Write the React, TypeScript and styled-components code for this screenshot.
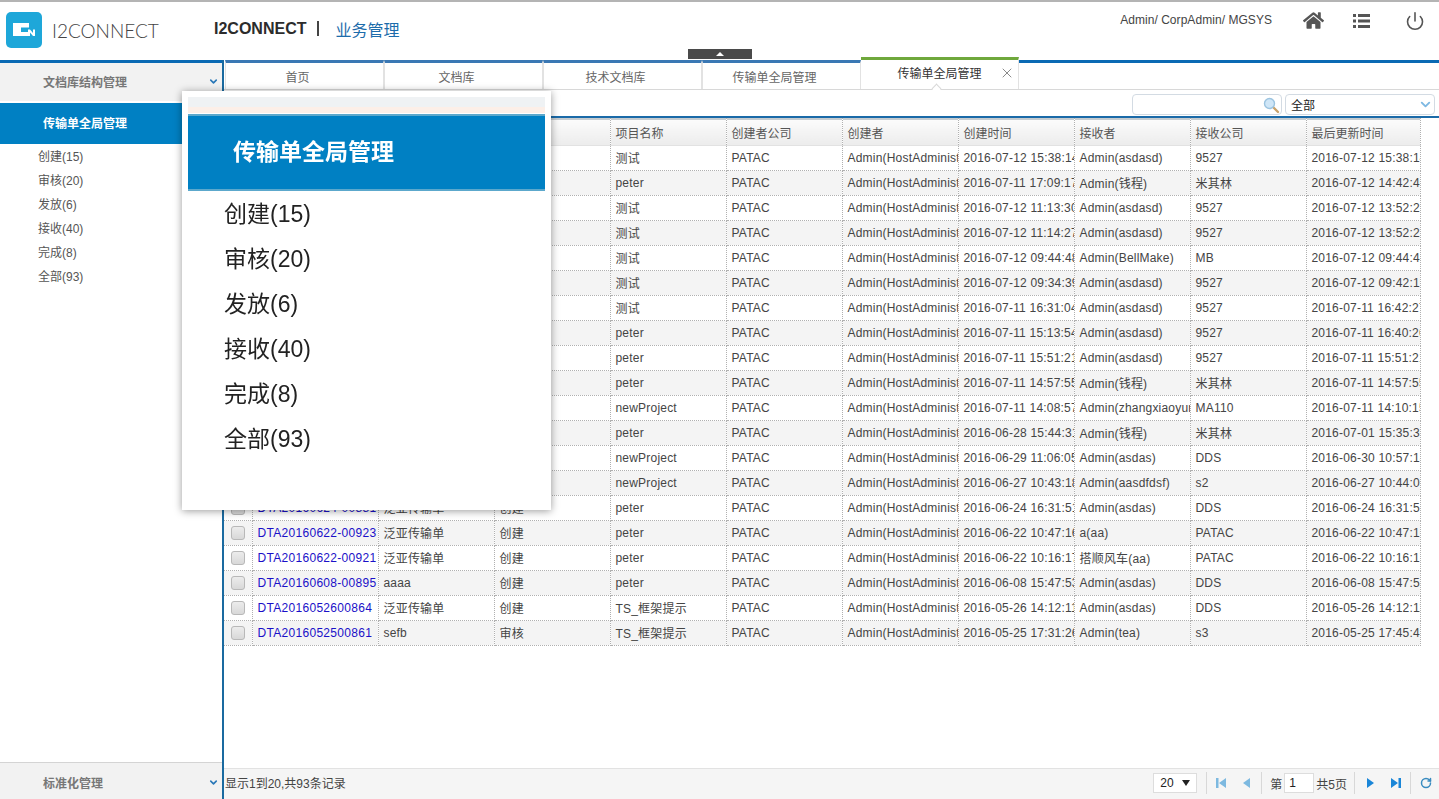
import { createGlobalStyle, styled } from "styled-components";
import { ChevronDown, Power, RotateCw, X } from "lucide-react";
import { FaHome } from "react-icons/fa";

const SANS = `"Liberation Sans", "Noto Sans CJK SC", sans-serif`;

const GlobalStyle = createGlobalStyle`
  html, body {
    margin: 0;
    padding: 0;
    height: 100%;
    overflow: hidden;
    background: #fff;
    font-family: ${SANS};
    font-size: 12px;
    color: #444;
  }
  * { box-sizing: border-box; }
`;

const tabs = ["首页", "文档库", "技术文档库", "传输单全局管理"];
const menuItems = ["创建(15)", "审核(20)", "发放(6)", "接收(40)", "完成(8)", "全部(93)"];
const columns = ["", "传输单编号", "传输单名称", "状态", "项目名称", "创建者公司", "创建者", "创建时间", "接收者", "接收公司", "最后更新时间"];
const columnWidths = [28, 126, 116, 116, 116, 116, 116, 116, 116, 116, 114];

type Row = [string, string, string, string, string, string, string, string];

const rows: Row[] = [
  ["DTA20160712-00981", "泛亚传输单", "创建", "测试", "2016-07-12 15:38:14", "Admin(asdasd)", "9527", "2016-07-12 15:38:14"],
  ["DTA20160711-00979", "泛亚传输单", "创建", "peter", "2016-07-11 17:09:17", "Admin(钱程)", "米其林", "2016-07-12 14:42:46"],
  ["DTA20160712-00977", "泛亚传输单", "创建", "测试", "2016-07-12 11:13:30", "Admin(asdasd)", "9527", "2016-07-12 13:52:25"],
  ["DTA20160712-00975", "泛亚传输单", "创建", "测试", "2016-07-12 11:14:27", "Admin(asdasd)", "9527", "2016-07-12 13:52:21"],
  ["DTA20160712-00973", "泛亚传输单", "创建", "测试", "2016-07-12 09:44:48", "Admin(BellMake)", "MB", "2016-07-12 09:44:48"],
  ["DTA20160712-00971", "泛亚传输单", "创建", "测试", "2016-07-12 09:34:39", "Admin(asdasd)", "9527", "2016-07-12 09:42:19"],
  ["DTA20160711-00969", "泛亚传输单", "创建", "测试", "2016-07-11 16:31:04", "Admin(asdasd)", "9527", "2016-07-11 16:42:27"],
  ["DTA20160711-00967", "泛亚传输单", "创建", "peter", "2016-07-11 15:13:54", "Admin(asdasd)", "9527", "2016-07-11 16:40:26"],
  ["DTA20160711-00965", "泛亚传输单", "创建", "peter", "2016-07-11 15:51:21", "Admin(asdasd)", "9527", "2016-07-11 15:51:21"],
  ["DTA20160711-00963", "泛亚传输单", "创建", "peter", "2016-07-11 14:57:55", "Admin(钱程)", "米其林", "2016-07-11 14:57:55"],
  ["DTA20160711-00961", "泛亚传输单", "创建", "newProject", "2016-07-11 14:08:57", "Admin(zhangxiaoyun)", "MA110", "2016-07-11 14:10:15"],
  ["DTA20160628-00901", "泛亚传输单", "创建", "peter", "2016-06-28 15:44:31", "Admin(钱程)", "米其林", "2016-07-01 15:35:36"],
  ["DTA20160629-00899", "泛亚传输单", "创建", "newProject", "2016-06-29 11:06:05", "Admin(asdas)", "DDS", "2016-06-30 10:57:18"],
  ["DTA20160627-00897", "泛亚传输单", "创建", "newProject", "2016-06-27 10:43:18", "Admin(aasdfdsf)", "s2", "2016-06-27 10:44:05"],
  ["DTA20160624-00881", "泛亚传输单", "创建", "peter", "2016-06-24 16:31:51", "Admin(asdas)", "DDS", "2016-06-24 16:31:51"],
  ["DTA20160622-00923", "泛亚传输单", "创建", "peter", "2016-06-22 10:47:16", "a(aa)", "PATAC", "2016-06-22 10:47:16"],
  ["DTA20160622-00921", "泛亚传输单", "创建", "peter", "2016-06-22 10:16:17", "搭顺风车(aa)", "PATAC", "2016-06-22 10:16:17"],
  ["DTA20160608-00895", "aaaa", "创建", "peter", "2016-06-08 15:47:53", "Admin(asdas)", "DDS", "2016-06-08 15:47:53"],
  ["DTA2016052600864", "泛亚传输单", "创建", "TS_框架提示", "2016-05-26 14:12:11", "Admin(asdas)", "DDS", "2016-05-26 14:12:11"],
  ["DTA2016052500861", "sefb", "审核", "TS_框架提示", "2016-05-25 17:31:26", "Admin(tea)", "s3", "2016-05-25 17:45:41"],
];

const Page = styled.div`
  position: relative;
  width: 1439px;
  height: 799px;
  display: flex;
  flex-direction: column;
  overflow: hidden;
  background: #fff;
`;

const Header = styled.header`
  height: 60px;
  flex: none;
  display: flex;
  align-items: center;
  border-top: 2px solid #b4b4b4;
  padding: 0 14px 5px 6px;
`;

const Brand = styled.div`
  display: flex;
  align-items: center;
  gap: 10px;
  width: 208px;
  margin-top: 3px;
`;

const BrandName = styled.span`
  font-family: Lato, sans-serif;
  font-weight: 300;
  font-size: 19px;
  color: #444;
`;

const SystemTitle = styled.div`
  display: flex;
  align-items: center;
  flex: 1;
  font-size: 16px;
`;

const SystemName = styled.b`
  color: #2c2c2c;
`;

const Divider = styled.i`
  width: 2px;
  height: 15px;
  margin: 0 16px 0 11px;
  background: #444;
`;

const SystemModule = styled.span`
  color: #1c6cab;
`;

const UserName = styled.span`
  margin: 0 31px 17px 0;
  color: #444;
  letter-spacing: 0.05px;
`;

const HeaderIcons = styled.div`
  display: flex;
  align-items: center;
  color: #555;
  margin-bottom: 16px;
`;

const HeaderIcon = styled.span<{ $gap: number }>`
  display: flex;
  margin-right: ${(p) => p.$gap}px;
`;

const Body = styled.div`
  flex: 1;
  display: flex;
  min-height: 0;
`;

const Sidebar = styled.aside`
  width: 222px;
  flex: none;
  display: flex;
  flex-direction: column;
  border-top: 3px solid #0a6ab4;
`;

const SideHead = styled.div`
  height: 38px;
  flex: none;
  display: flex;
  align-items: center;
  justify-content: space-between;
  padding: 0 3px 1px 43px;
  background: #f2f2f2;
  font-weight: bold;
  color: #777;
  svg { color: #2a78b8; }
`;

const SideActive = styled.div`
  height: 41px;
  margin-top: 2px;
  display: flex;
  align-items: center;
  padding: 0 0 2px 43px;
  background: #0080c3;
  color: #fff;
  font-weight: bold;
`;

const SideList = styled.ul`
  flex: 1;
  list-style: none;
  margin: 0;
  padding: 1px 0 0 38px;
`;

const SideItem = styled.li`
  height: 24px;
  line-height: 24px;
  color: #555;
`;

const SideFoot = styled(SideHead)`
  height: 37px;
  padding-bottom: 0;
  padding-top: 2px;
  border-top: 1px solid #d4d4d4;
`;

const Main = styled.main`
  flex: 1;
  min-width: 0;
  display: flex;
  flex-direction: column;
  border-left: 2px solid #1a6aa0;
`;

const TabBar = styled.nav`
  height: 30px;
  flex: none;
  display: flex;
  align-items: stretch;
  padding-left: 1px;
  border-bottom: 1px solid #d8d8d8;
`;

const Tab = styled.div`
  width: 159px;
  flex: none;
  border-top: 3px solid #3a78b4;
  border-right: 1px solid #e2e2e2;
  border-left: 1px solid #e2e2e2;
  display: flex;
  align-items: center;
  justify-content: center;
  color: #666;
  padding: 1px 14px 0 0;
`;

const ActiveTab = styled.div`
  position: relative;
  width: 158px;
  flex: none;
  margin-top: -3px;
  height: 32px;
  border-top: 3px solid #6fa83c;
  border-right: 1px solid #e2e2e2;
  display: flex;
  align-items: center;
  justify-content: center;
  color: #333;
  background: #fff;
  padding-bottom: 5px;
  &::after {
    content: "";
    position: absolute;
    left: 72px;
    bottom: -3px;
    width: 6px;
    height: 6px;
    background: #fff;
    border-top: 1px solid #d8d8d8;
    border-left: 1px solid #d8d8d8;
    transform: rotate(45deg);
  }
`;

const TabClose = styled.span`
  position: absolute;
  right: 3px;
  top: 5px;
  display: flex;
  color: #777;
`;

const TabRest = styled.div`
  flex: 1;
  border-top: 3px solid #0a6ab4;
`;

const Toolbar = styled.div`
  height: 26px;
  flex: none;
  display: flex;
  justify-content: flex-end;
  align-items: flex-start;
  gap: 3px;
  padding: 4px 4px 0 0;
`;

const SearchBox = styled.div`
  width: 150px;
  height: 21px;
  border: 1px solid #d3dbe3;
  border-radius: 4px;
  display: flex;
  align-items: center;
  justify-content: flex-end;
  padding-right: 1px;
`;

const FilterSelect = styled.div`
  width: 150px;
  height: 21px;
  border: 1px solid #d3dbe3;
  border-radius: 4px;
  display: flex;
  align-items: center;
  justify-content: space-between;
  padding: 0 1px 0 5px;
  color: #222;
  svg { color: #7db8e2; }
`;

const GridWrap = styled.div`
  flex: 1;
  min-height: 0;
  border-top: 2px solid #1a6aa8;
`;

const Grid = styled.table`
  table-layout: fixed;
  width: 1196px;
  border-collapse: collapse;
`;

const HeadCell = styled.th`
  height: 27px;
  padding: 2px 0 0 5px;
  text-align: left;
  font-weight: normal;
  color: #555;
  background: linear-gradient(#c6ccd0 0 2px, #fbfbfb 2px, #ececec 100%);
  border-right: 1px dotted #b0b0b0;
  border-bottom: 1px solid #e2e2e2;
  overflow: hidden;
  white-space: nowrap;
`;

const GridRow = styled.tr<{ $even: boolean }>`
  background: ${(p) => (p.$even ? "#f4f4f4" : "#fff")};
`;

const Cell = styled.td`
  height: 25px;
  padding: 0 0 0 5px;
  border-right: 1px dotted #b0b0b0;
  border-bottom: 1px dotted #b0b0b0;
  color: #444;
  letter-spacing: 0.2px;
  overflow: hidden;
  white-space: nowrap;
`;

const CheckCell = styled(Cell)`
  padding: 0 0 0 7px;
`;

const CheckBox = styled.span`
  display: block;
  width: 14px;
  height: 14px;
  border: 1px solid #b8b8b8;
  border-radius: 3px;
  background: linear-gradient(#ececec, #d8d8d8);
`;

const DocLink = styled.a`
  color: #1a10c8;
  letter-spacing: 0.3px;
`;

const Pager = styled.footer`
  height: 31px;
  flex: none;
  display: flex;
  align-items: center;
  justify-content: space-between;
  padding: 0 7px 2px 1px;
  border-top: 1px solid #e2e2e2;
  background: #f5f5f5;
  color: #444;
`;

const PagerCount = styled.span`
  margin-bottom: 1px;
`;

const PagerControls = styled.div`
  display: flex;
  align-items: center;
  height: 22px;
`;

const PageSize = styled.div`
  width: 44px;
  height: 20px;
  display: flex;
  align-items: center;
  justify-content: space-between;
  padding: 0 6px;
  margin-right: 9px;
  border: 1px solid #ddd;
  background: #fff;
  color: #222;
`;

const SizeCaret = styled.i`
  width: 0;
  height: 0;
  border: 4px solid transparent;
  border-top: 6px solid #222;
  border-bottom: 0;
`;

const Sep = styled.i<{ $left?: number; $right?: number }>`
  width: 1px;
  height: 22px;
  margin: 0 ${(p) => p.$right ?? 0}px 0 ${(p) => p.$left ?? 0}px;
  background: #d8d8d8;
`;

const PagerButton = styled.span<{ $off?: boolean }>`
  width: 26px;
  display: flex;
  justify-content: center;
  color: ${(p) => (p.$off ? "#7db9e0" : "#1a86d8")};
`;

const PagerGroup = styled.div`
  display: flex;
  align-items: center;
  gap: 2px;
  padding: 0 7px 0 8px;
  color: #444;
`;

const PageInput = styled.div`
  width: 30px;
  height: 20px;
  padding-left: 4px;
  line-height: 18px;
  border: 1px solid #ddd;
  background: #fff;
  color: #222;
`;

const RefreshButton = styled.span`
  display: flex;
  margin-left: 9px;
  color: #3a8cc0;
`;

const CollapseHandle = styled.div`
  position: absolute;
  left: 688px;
  top: 49px;
  width: 64px;
  height: 10px;
  display: flex;
  align-items: center;
  justify-content: center;
  background: #4a4a4a;
  &::before {
    content: "";
    border: 4px solid transparent;
    border-bottom: 4px solid #fff;
    border-top: 0;
  }
`;

const Zoomed = styled.div`
  position: absolute;
  left: 182px;
  top: 91px;
  width: 369px;
  height: 419px;
  padding: 6px;
  background: #fff;
  box-shadow: 0 1px 8px rgba(0, 0, 0, 0.4);
`;

const ZoomStripe = styled.div`
  height: 16px;
  background: linear-gradient(#eff2f4 60%, #fcefe8 60%);
`;

const ZoomHead = styled.div`
  height: 77px;
  margin-top: 1px;
  display: flex;
  align-items: center;
  padding: 0 0 5px 45px;
  background: #0080c3;
  border-top: 2px solid #5ca8cc;
  border-bottom: 2px solid #5ca8cc;
  color: #fff;
  font-size: 23px;
  font-weight: bold;
  filter: blur(0.5px);
`;

const ZoomList = styled.ul`
  list-style: none;
  margin: 0;
  padding: 1px 0 0 36px;
  filter: blur(0.5px);
`;

const ZoomItem = styled.li`
  height: 45px;
  line-height: 45px;
  font-size: 23px;
  color: #222;
`;

function Logo() {
  return (
    <svg width="36" height="36" viewBox="0 0 36 36">
      <rect width="36" height="36" rx="5" fill="#1ea7d9" />
      <path d="M7 11h16v4.5h-8v4.5h8v4H7z" fill="#fff" />
      <path d="M22 17.5h2l3 3.5v-3.500h2V24h-2l-3-3.500V24h-2z" fill="#fff" />
    </svg>
  );
}

function ListGlyph() {
  return (
    <svg width="17" height="14" viewBox="0 0 17 14">
      <path d="M0 0h3v3H0zM5 0h12v3H5zM0 5.500h3v3H0zM5 5.500h12v3H5zM0 11h3v3H0zM5 11h12v3H5z" fill="currentColor" />
    </svg>
  );
}

function SearchGlyph() {
  return (
    <svg width="18" height="18" viewBox="0 0 18 18">
      <line x1="11" y1="11" x2="16" y2="16" stroke="#c9a26a" strokeWidth="2.4" strokeLinecap="round" />
      <circle cx="7.500" cy="7.500" r="5" fill="#cfe6f7" stroke="#9cc4e0" strokeWidth="1.4" />
    </svg>
  );
}

function PagerGlyph({ kind }: { kind: "first" | "prev" | "next" | "last" }) {
  const d = {
    first: "M1 1h2.500v10H1zM11 1v10L4 6z",
    prev: "M9 1v10L2 6z",
    next: "M3 1v10l7-5z",
    last: "M1 1v10l7-5zM8.500 1H11v10H8.500z",
  }[kind];
  return (
    <svg width="12" height="12" viewBox="0 0 12 12">
      <path d={d} fill="currentColor" />
    </svg>
  );
}

export default function App() {
  return (
    <Page>
      <GlobalStyle />
      <Header>
        <Brand>
          <Logo />
          <BrandName>I2CONNECT</BrandName>
        </Brand>
        <SystemTitle>
          <SystemName>I2CONNECT</SystemName>
          <Divider />
          <SystemModule>业务管理</SystemModule>
        </SystemTitle>
        <UserName>Admin/ CorpAdmin/ MGSYS</UserName>
        <HeaderIcons>
          <HeaderIcon $gap={29}>
            <FaHome size={21} />
          </HeaderIcon>
          <HeaderIcon $gap={35}>
            <ListGlyph />
          </HeaderIcon>
          <HeaderIcon $gap={0}>
            <Power size={20} strokeWidth={1.9} />
          </HeaderIcon>
        </HeaderIcons>
      </Header>
      <Body>
        <Sidebar>
          <SideHead>
            文档库结构管理
            <ChevronDown size={11} strokeWidth={3.5} />
          </SideHead>
          <SideActive>传输单全局管理</SideActive>
          <SideList>
            {menuItems.map((item) => (
              <SideItem key={item}>{item}</SideItem>
            ))}
          </SideList>
          <SideFoot>
            标准化管理
            <ChevronDown size={11} strokeWidth={3.5} />
          </SideFoot>
        </Sidebar>
        <Main>
          <TabBar>
            {tabs.map((tab) => (
              <Tab key={tab}>{tab}</Tab>
            ))}
            <ActiveTab>
              传输单全局管理
              <TabClose>
                <X size={16} strokeWidth={1.3} />
              </TabClose>
            </ActiveTab>
            <TabRest />
          </TabBar>
          <Toolbar>
            <SearchBox>
              <SearchGlyph />
            </SearchBox>
            <FilterSelect>
              全部
              <ChevronDown size={15} strokeWidth={3} />
            </FilterSelect>
          </Toolbar>
          <GridWrap>
            <Grid>
              <colgroup>
                {columnWidths.map((width, i) => (
                  <col key={i} width={width} />
                ))}
              </colgroup>
              <thead>
                <tr>
                  {columns.map((col, i) => (
                    <HeadCell key={i}>{col}</HeadCell>
                  ))}
                </tr>
              </thead>
              <tbody>
                {rows.map((row, i) => (
                  <GridRow key={row[0]} $even={i % 2 === 1}>
                    <CheckCell>
                      <CheckBox />
                    </CheckCell>
                    <Cell>
                      <DocLink>{row[0]}</DocLink>
                    </Cell>
                    <Cell>{row[1]}</Cell>
                    <Cell>{row[2]}</Cell>
                    <Cell>{row[3]}</Cell>
                    <Cell>PATAC</Cell>
                    <Cell>Admin(HostAdministrator)</Cell>
                    <Cell>{row[4]}</Cell>
                    <Cell>{row[5]}</Cell>
                    <Cell>{row[6]}</Cell>
                    <Cell>{row[7]}</Cell>
                  </GridRow>
                ))}
              </tbody>
            </Grid>
          </GridWrap>
          <Pager>
            <PagerCount>显示1到20,共93条记录</PagerCount>
            <PagerControls>
              <PageSize>
                20
                <SizeCaret />
              </PageSize>
              <Sep $right={1} />
              <PagerButton $off>
                <PagerGlyph kind="first" />
              </PagerButton>
              <PagerButton $off>
                <PagerGlyph kind="prev" />
              </PagerButton>
              <Sep $left={1} />
              <PagerGroup>
                第<PageInput>1</PageInput>共5页
              </PagerGroup>
              <Sep $right={2} />
              <PagerButton>
                <PagerGlyph kind="next" />
              </PagerButton>
              <PagerButton>
                <PagerGlyph kind="last" />
              </PagerButton>
              <Sep $left={1} />
              <RefreshButton>
                <RotateCw size={12} strokeWidth={3} />
              </RefreshButton>
            </PagerControls>
          </Pager>
        </Main>
      </Body>
      <CollapseHandle />
      <Zoomed>
        <ZoomStripe />
        <ZoomHead>传输单全局管理</ZoomHead>
        <ZoomList>
          {menuItems.map((item) => (
            <ZoomItem key={item}>{item}</ZoomItem>
          ))}
        </ZoomList>
      </Zoomed>
    </Page>
  );
}
